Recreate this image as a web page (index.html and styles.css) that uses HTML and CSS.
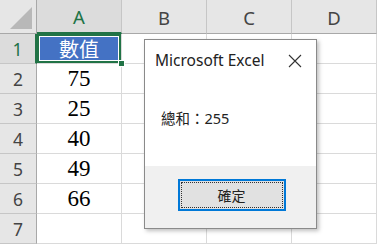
FILE: index.html
```html
<!DOCTYPE html>
<html>
<head>
    <title>Excel MsgBox</title>
    <link rel="stylesheet" href="styles.css">
</head>
<body>
    <div class="sheet">
        <div class="hd corner"><span class="tri"></span></div>
        <div class="hd col active">A</div>
        <div class="hd col">B</div>
        <div class="hd col">C</div>
        <div class="hd col">D</div>

        <div class="hd row active">1</div>
        <div class="cell sel">數值<span class="handle"></span></div>
        <div class="cell"></div><div class="cell"></div><div class="cell"></div>

        <div class="hd row">2</div>
        <div class="cell num">75</div>
        <div class="cell"></div><div class="cell"></div><div class="cell"></div>

        <div class="hd row">3</div>
        <div class="cell num">25</div>
        <div class="cell"></div><div class="cell"></div><div class="cell"></div>

        <div class="hd row">4</div>
        <div class="cell num">40</div>
        <div class="cell"></div><div class="cell"></div><div class="cell"></div>

        <div class="hd row">5</div>
        <div class="cell num">49</div>
        <div class="cell"></div><div class="cell"></div><div class="cell"></div>

        <div class="hd row">6</div>
        <div class="cell num">66</div>
        <div class="cell"></div><div class="cell"></div><div class="cell"></div>

        <div class="hd row">7</div>
        <div class="cell"></div>
        <div class="cell"></div><div class="cell"></div><div class="cell"></div>
    </div>

    <div class="dialog">
        <div class="dlg-body">
            <div class="dlg-title">
                <span>Microsoft Excel</span>
                <svg class="close" width="14" height="14" viewBox="0 0 14 14">
                    <path d="M1 1 L13 13 M13 1 L1 13" stroke="#333" stroke-width="1.1" fill="none"/>
                </svg>
            </div>
            <div class="dlg-msg">總和：255</div>
        </div>
        <div class="dlg-foot">
            <button class="ok"><span>確定</span></button>
        </div>
    </div>
</body>
</html>
```

FILE: styles.css
```css
body {
    margin: 0;
    background-color: #ffffff;
    font-family: "Noto Sans", "Open Sans", sans-serif;
    width: 378px;
    height: 246px;
    overflow: hidden;
    position: relative;
}

.sheet {
    display: grid;
    grid-template-columns: 37px 85px 85px 85px 85px;
    grid-template-rows: 34px repeat(7, 30px);
}

.hd {
    background-color: #e6e6e6;
    color: #444;
    display: flex;
    align-items: center;
    justify-content: center;
    font-size: 18.5px;
    box-sizing: border-box;
}

.hd.row {
    font-size: 17.5px;
    border-right: 1px solid #a8a8a8;
    border-bottom: 1px solid #c6c6c6;
}

.hd.col {
    border-right: 1px solid #c6c6c6;
    border-bottom: 1px solid #a8a8a8;
    padding-top: 1px;
}

.hd.active {
    color: #217346;
    background-color: #dcdcdc;
}

.hd.col.active {
    border-bottom: 2px solid #217346;
}

.hd.row.active {
    border-right: 2px solid #217346;
}

.corner {
    border-right: 1px solid #a8a8a8;
    border-bottom: 1px solid #a8a8a8;
    align-items: flex-end;
    justify-content: flex-end;
    padding: 0 4px 4px 0;
}

.tri {
    width: 0;
    height: 0;
    border-left: 22px solid transparent;
    border-bottom: 22px solid #b8b8b8;
}

.cell {
    border-right: 1px solid #dadada;
    border-bottom: 1px solid #dadada;
    box-sizing: border-box;
    display: flex;
    align-items: center;
    justify-content: center;
    font-family: "Liberation Serif", "Noto Sans CJK TC", serif;
    font-size: 23px;
    color: #000;
}

.cell.sel {
    position: relative;
    background-color: #4472c4;
    color: #fff;
    font-family: "Noto Sans CJK TC", serif;
    font-size: 20px;
    box-shadow: inset 0 0 0 2px #217346, inset 0 0 0 3px #ffffff;
}

.handle {
    position: absolute;
    right: -4px;
    bottom: -4px;
    width: 5px;
    height: 5px;
    background-color: #217346;
    border: 1px solid #fff;
}

.dialog {
    position: absolute;
    left: 144px;
    top: 39px;
    width: 173px;
    height: 190px;
    box-sizing: border-box;
    border: 1px solid #8a8a8a;
    box-shadow: 2px 2px 4px rgba(0, 0, 0, 0.25);
    background-color: #fff;
    display: flex;
    flex-direction: column;
}

.dlg-body {
    height: 126px;
    background-color: #fff;
}

.dlg-title {
    display: flex;
    justify-content: space-between;
    align-items: center;
    padding: 9px 14px 0 10px;
    font-size: 15.5px;
    color: #222;
}

.close {
    margin-top: 1px;
}

.dlg-msg {
    margin-top: 36px;
    padding-left: 16px;
    font-family: "Noto Sans", "Noto Sans CJK TC", sans-serif;
    font-size: 14.5px;
    color: #222;
}

.dlg-foot {
    flex: 1;
    background-color: #f0f0f0;
    display: flex;
    justify-content: center;
    padding-top: 13px;
    padding-left: 2px;
}

.ok {
    width: 108px;
    height: 32px;
    border: 2px solid #0078d7;
    background-color: #e1e1e1;
    padding: 1px;
    font-family: "Noto Sans CJK TC", sans-serif;
    font-size: 14px;
    color: #222;
    cursor: pointer;
}

.ok span {
    display: flex;
    align-items: center;
    justify-content: center;
    height: 100%;
    border: 1px dotted #333;
    box-sizing: border-box;
}
```
